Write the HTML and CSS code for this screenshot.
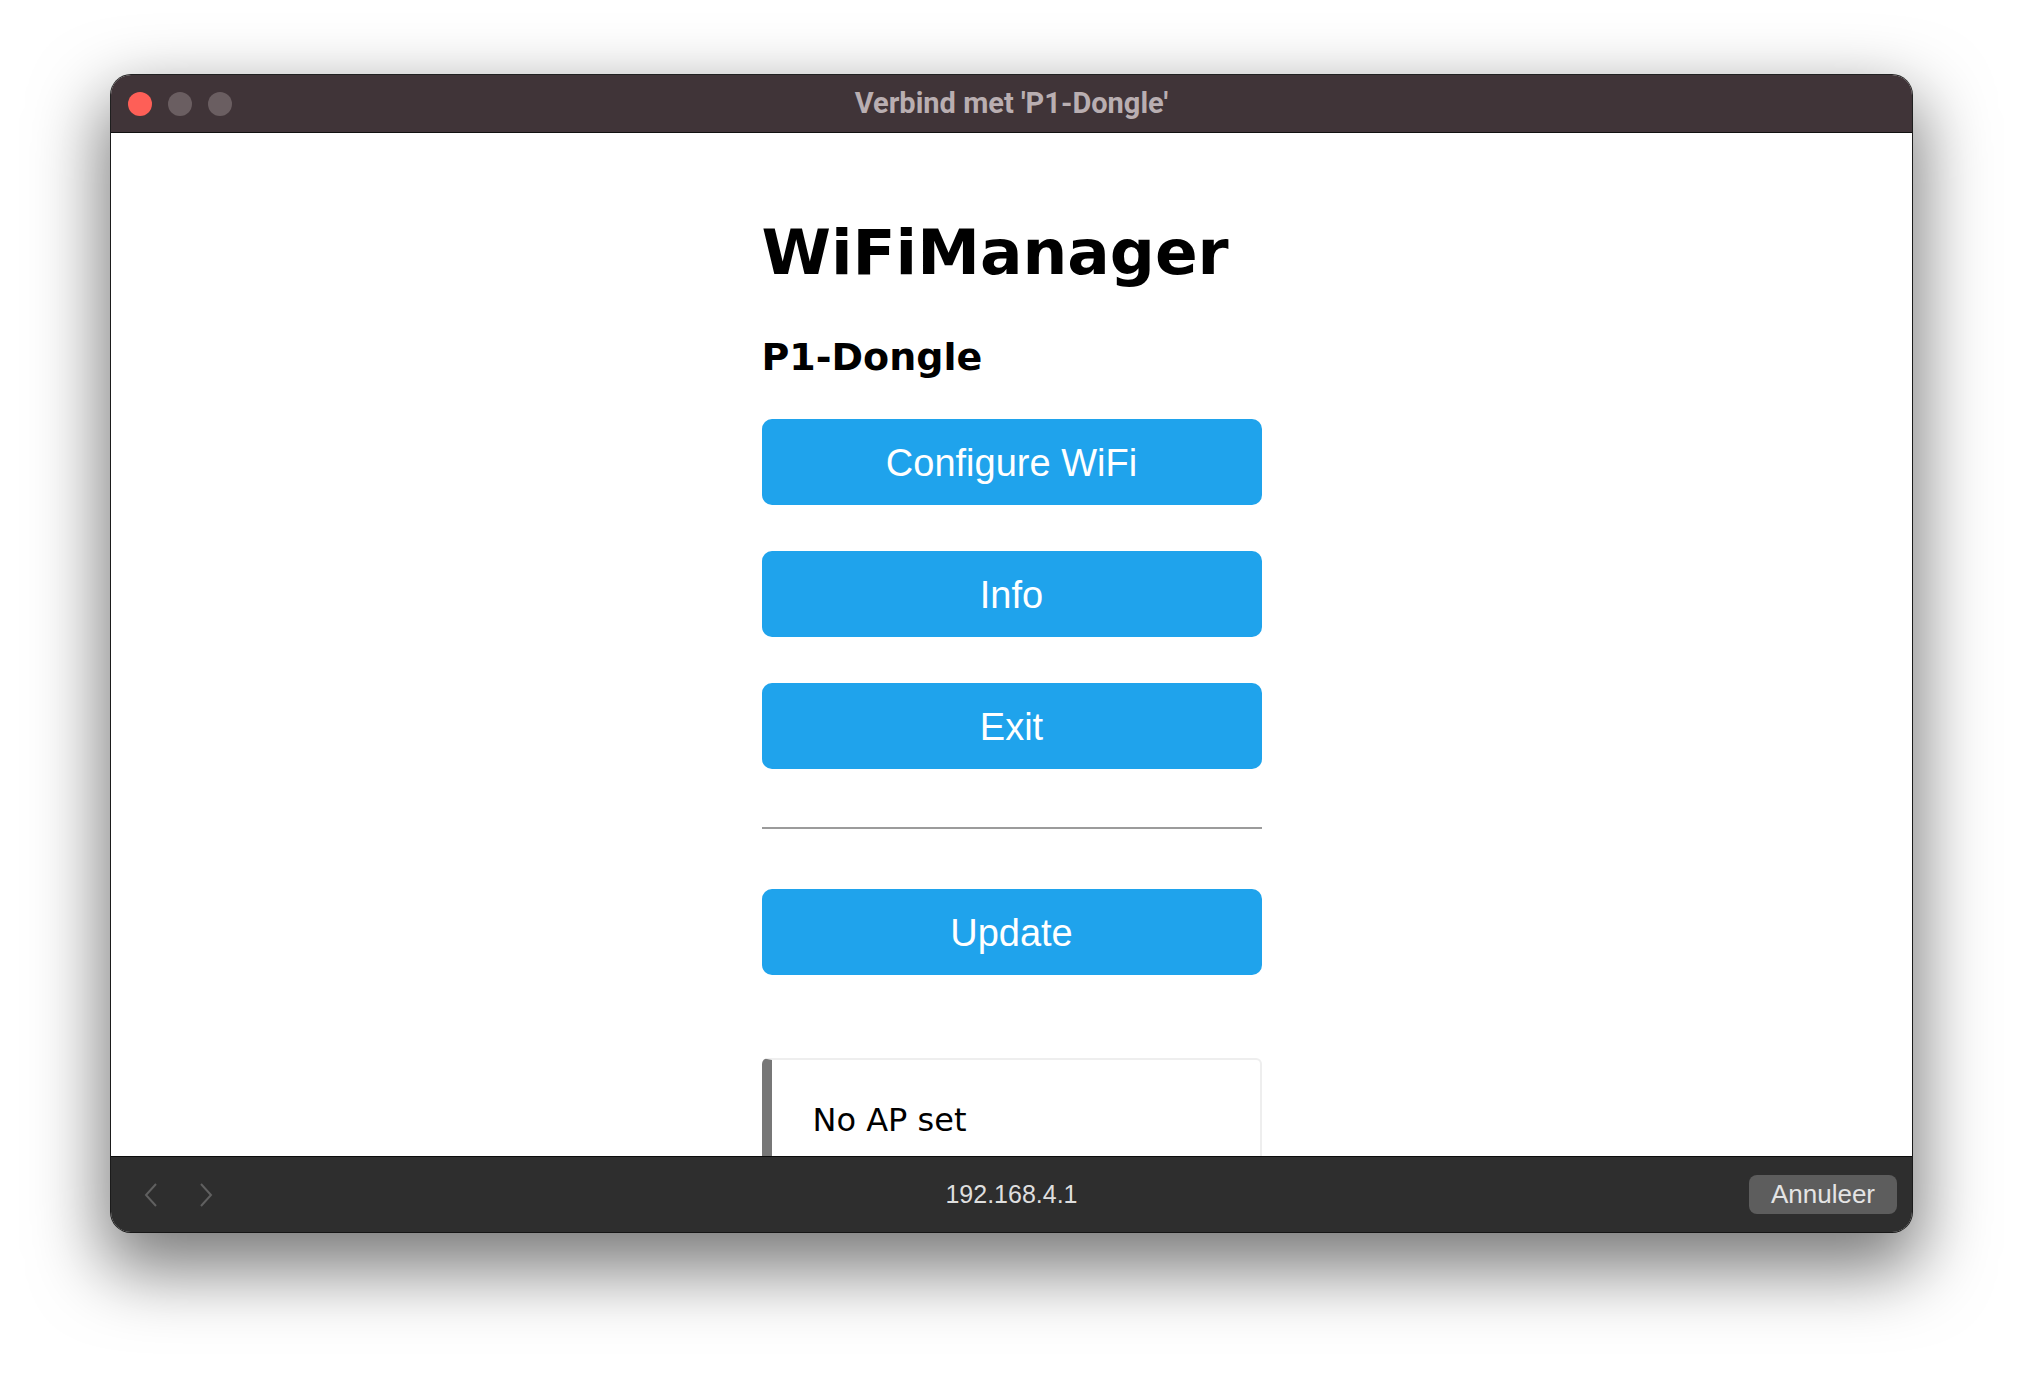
FILE: index.html
```html
<!DOCTYPE html>
<html>
<head>
    <title>Verbind met 'P1-Dongle'</title>
    <link rel="stylesheet" href="styles.css">
</head>
<body>
    <div class="window">
        <div class="titlebar">
            <div class="lights">
                <span class="light close"></span>
                <span class="light"></span>
                <span class="light"></span>
            </div>
            <div class="title">Verbind met 'P1-Dongle'</div>
            <div></div>
        </div>

        <div class="content">
            <div class="wrap">
                <h1>WiFiManager</h1>
                <h3>P1-Dongle</h3>
                <div class="menu">
                    <button class="btn">Configure WiFi</button>
                    <button class="btn">Info</button>
                    <button class="btn">Exit</button>
                </div>
                <hr>
                <button class="btn">Update</button>
                <div class="msg">No AP set</div>
            </div>
        </div>

        <div class="bottombar">
            <div class="nav">
                <svg width="14" height="24" viewBox="0 0 14 24"><path d="M12 1 L2 12 L12 23" fill="none" stroke="#606060" stroke-width="2"/></svg>
                <svg width="14" height="24" viewBox="0 0 14 24"><path d="M2 1 L12 12 L2 23" fill="none" stroke="#606060" stroke-width="2"/></svg>
            </div>
            <div class="address">192.168.4.1</div>
            <button class="cancel">Annuleer</button>
        </div>
    </div>
</body>
</html>
```

FILE: styles.css
```css
body {
    margin: 0;
    background-color: #fff;
    height: 100vh;
    overflow: hidden;
}

.window {
    margin: 75px 0 0 111px;
    width: 1801px;
    height: 1157px;
    border-radius: 20px;
    overflow: hidden;
    display: flex;
    flex-direction: column;
    box-shadow: 0 0 0 1px rgba(0, 0, 0, 0.85), 0 30px 70px 8px rgba(0, 0, 0, 0.52);
}

.titlebar {
    height: 57px;
    flex-shrink: 0;
    background-color: #403438;
    border-bottom: 1px solid #111;
    display: grid;
    grid-template-columns: 1fr auto 1fr;
    align-items: center;
}

.lights {
    display: flex;
    gap: 16px;
    padding-left: 17px;
}

.light {
    width: 24px;
    height: 24px;
    border-radius: 50%;
    background-color: #6a5e61;
}

.light.close {
    background-color: #fe5f57;
}

.title {
    font-family: Roboto, "Liberation Sans", sans-serif;
    font-weight: bold;
    font-size: 29px;
    color: #b9aeb1;
    padding-bottom: 2px;
}

.content {
    flex: 1;
    overflow: hidden;
    background-color: #fff;
}

.wrap {
    width: 500px;
    margin: 0 auto;
    padding-top: 82px;
    font-family: "DejaVu Sans", Verdana, sans-serif;
}

h1 {
    margin: 0;
    font-size: 63px;
    line-height: 75px;
}

h3 {
    margin: 46px 0 0 0;
    font-size: 38px;
    line-height: 42px;
}

.menu {
    display: flex;
    flex-direction: column;
    gap: 46px;
    margin-top: 41px;
}

.btn {
    display: block;
    width: 100%;
    height: 86px;
    border: 0;
    border-radius: 10px;
    background-color: #1fa3ec;
    color: #fff;
    font-family: "Liberation Sans", Arial, sans-serif;
    font-size: 38px;
    padding: 2px 0 0 0;
    line-height: 84px;
}

hr {
    border: 0;
    border-top: 2px solid #9b9b9b;
    margin: 58px 0 60px 0;
}

.msg {
    margin-top: 83px;
    border: 2px solid #eee;
    border-left: 10px solid #777;
    border-radius: 6px;
    padding: 40px 20px 40px 41px;
    font-size: 32px;
    line-height: 40px;
}

.bottombar {
    height: 75px;
    flex-shrink: 0;
    background-color: #2e2e2e;
    border-top: 1px solid #0c0c0c;
    display: grid;
    grid-template-columns: 1fr auto 1fr;
    align-items: center;
}

.nav {
    display: flex;
    gap: 41px;
    padding-left: 33px;
}

.address {
    font-family: "Liberation Sans", Arial, sans-serif;
    font-size: 25px;
    color: #dedede;
}

.cancel {
    justify-self: end;
    margin-right: 15px;
    width: 148px;
    height: 39px;
    border: 0;
    border-radius: 8px;
    background-color: #5d5d5d;
    color: #e4e4e4;
    font-family: "Liberation Sans", Arial, sans-serif;
    font-size: 26px;
    padding: 0;
}
```
